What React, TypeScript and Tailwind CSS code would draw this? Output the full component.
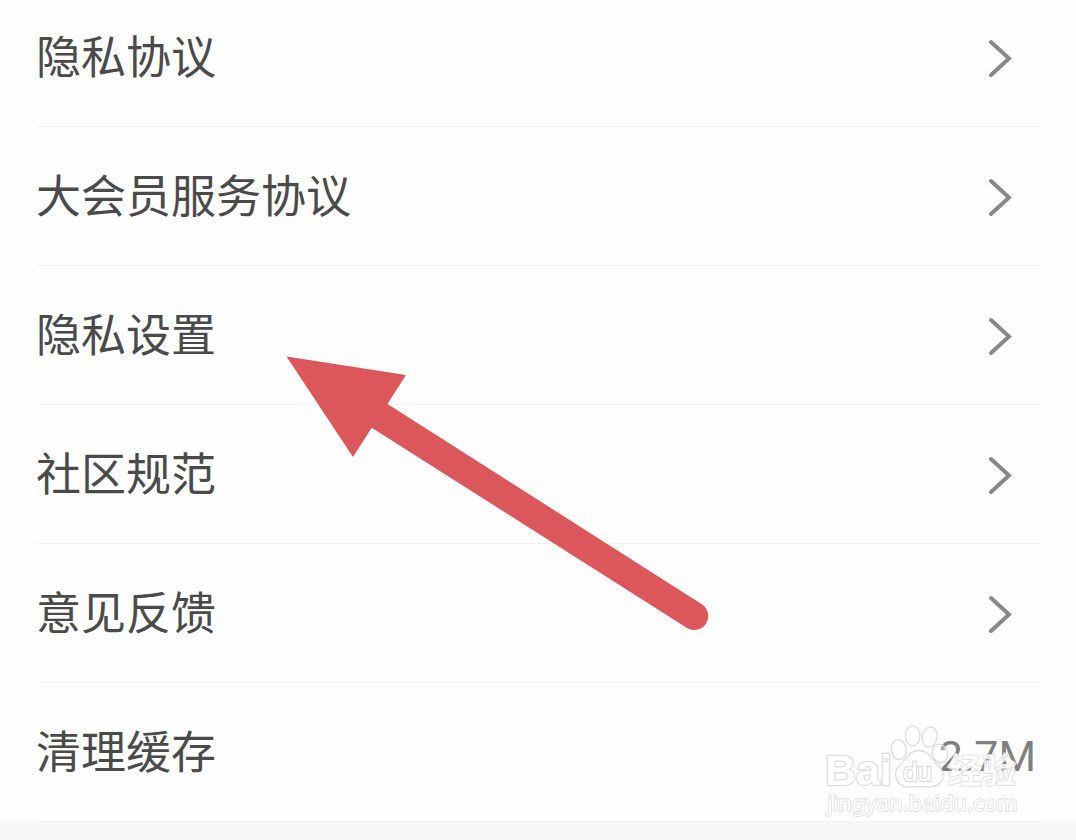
import React from 'react';

interface SettingItem {
  id: string;
  label: string;
  value?: string;
}

const items: SettingItem[] = [
  { id: 'privacy-policy', label: '隐私协议' },
  { id: 'member-terms', label: '大会员服务协议' },
  { id: 'privacy-settings', label: '隐私设置' },
  { id: 'community-rules', label: '社区规范' },
  { id: 'feedback', label: '意见反馈' },
  { id: 'clear-cache', label: '清理缓存', value: '2.7M' },
];

const rowClasses =
  "flex w-full items-center justify-between py-[37px] text-left text-[45px] text-[#4a4a4a]";

const labelClasses = "pt-1 leading-[60px]";

const Chevron: React.FC = () => (
  <svg className="mr-7 h-10 w-6 shrink-0" viewBox="0 0 24 40" fill="none" aria-hidden="true">
    <path d="M3 5L21 21.5L3 38" stroke="#888888" strokeWidth="4" strokeLinecap="round" strokeLinejoin="miter" />
  </svg>
);

const SettingRow: React.FC<{ item: SettingItem }> = ({ item }) => (
  <li className="border-b border-[#f3f3f3]">
    {item.value ? (
      <button type="button" className={rowClasses}>
        <span className={labelClasses}>{item.label}</span>
        <span className="pt-2 pr-1 text-[43px] leading-[56px] text-[#808080]">{item.value}</span>
      </button>
    ) : (
      <a href={`#${item.id}`} className={rowClasses}>
        <span className={labelClasses}>{item.label}</span>
        <Chevron />
      </a>
    )}
  </li>
);

// Red pointer laid over the list
const PointerArrow: React.FC = () => (
  <svg
    className="pointer-events-none absolute top-[350px] left-[280px] h-[290px] w-[440px]"
    viewBox="280 350 440 290"
    aria-hidden="true"
  >
    <path
      d="M286.5 356.5L406 375L387.5 404L701.5 604A14 14 0 0 1 687 628L371.7 427.7L353 457Z"
      fill="#db575c"
    />
  </svg>
);

const Watermark: React.FC = () => (
  <svg
    className="pointer-events-none absolute right-[50px] bottom-0 h-[100px] w-[206px]"
    viewBox="820 720 206 100"
    fill="#ffffff"
    stroke="#dcdcdc"
    strokeWidth="1.3"
  >
    <g fillOpacity="0.3" transform="translate(0 -1)">
      <ellipse cx="898.8" cy="748.7" rx="7.4" ry="10" transform="rotate(-8 898.8 748.7)" />
      <ellipse cx="912.7" cy="734.8" rx="7.3" ry="10" />
      <ellipse cx="929.6" cy="736" rx="7.5" ry="10" transform="rotate(10 929.6 736)" />
      <ellipse cx="940" cy="752.5" rx="7.5" ry="9.5" transform="rotate(-14 940 752.5)" />
      <path d="M919 749.5C909 750 907 757 901 763C895 768 894 775 898 781C903 788 912 785.5 919 785.5C926 785.5 935 788 941 781C946 774 942 768 936 762C931 757 929 750 919 749.5Z" />
    </g>
    <g fontFamily="'Liberation Sans', 'Noto Sans CJK SC', sans-serif" paintOrder="stroke" strokeWidth="2.4">
      <text x="825" y="783" fontSize="43" fontWeight="700">Bai</text>
      <text x="903" y="779" fontSize="26">du</text>
      <text x="948" y="781" fontSize="34" fontWeight="700" strokeWidth="1.4" fillOpacity="0.8">经验</text>
    </g>
    <text
      x="827"
      y="809"
      fontSize="22"
      fontFamily="'Noto Sans', sans-serif"
      paintOrder="stroke"
      strokeWidth="1.6"
    >
      jingyan.baidu.com
    </text>
  </svg>
);

export default function App() {
  return (
    <div className="min-h-screen overflow-hidden bg-[#f7f7f7] font-[Roboto,'Noto_Sans_CJK_SC',sans-serif]">
      <main className="relative flow-root">
        {/* list is scrolled a little past its first row */}
        <ul className="-mt-3 bg-[#fefefe] px-9">
          {items.map((item) => (
            <SettingRow key={item.id} item={item} />
          ))}
        </ul>
        <PointerArrow />
        <Watermark />
      </main>
    </div>
  );
}
